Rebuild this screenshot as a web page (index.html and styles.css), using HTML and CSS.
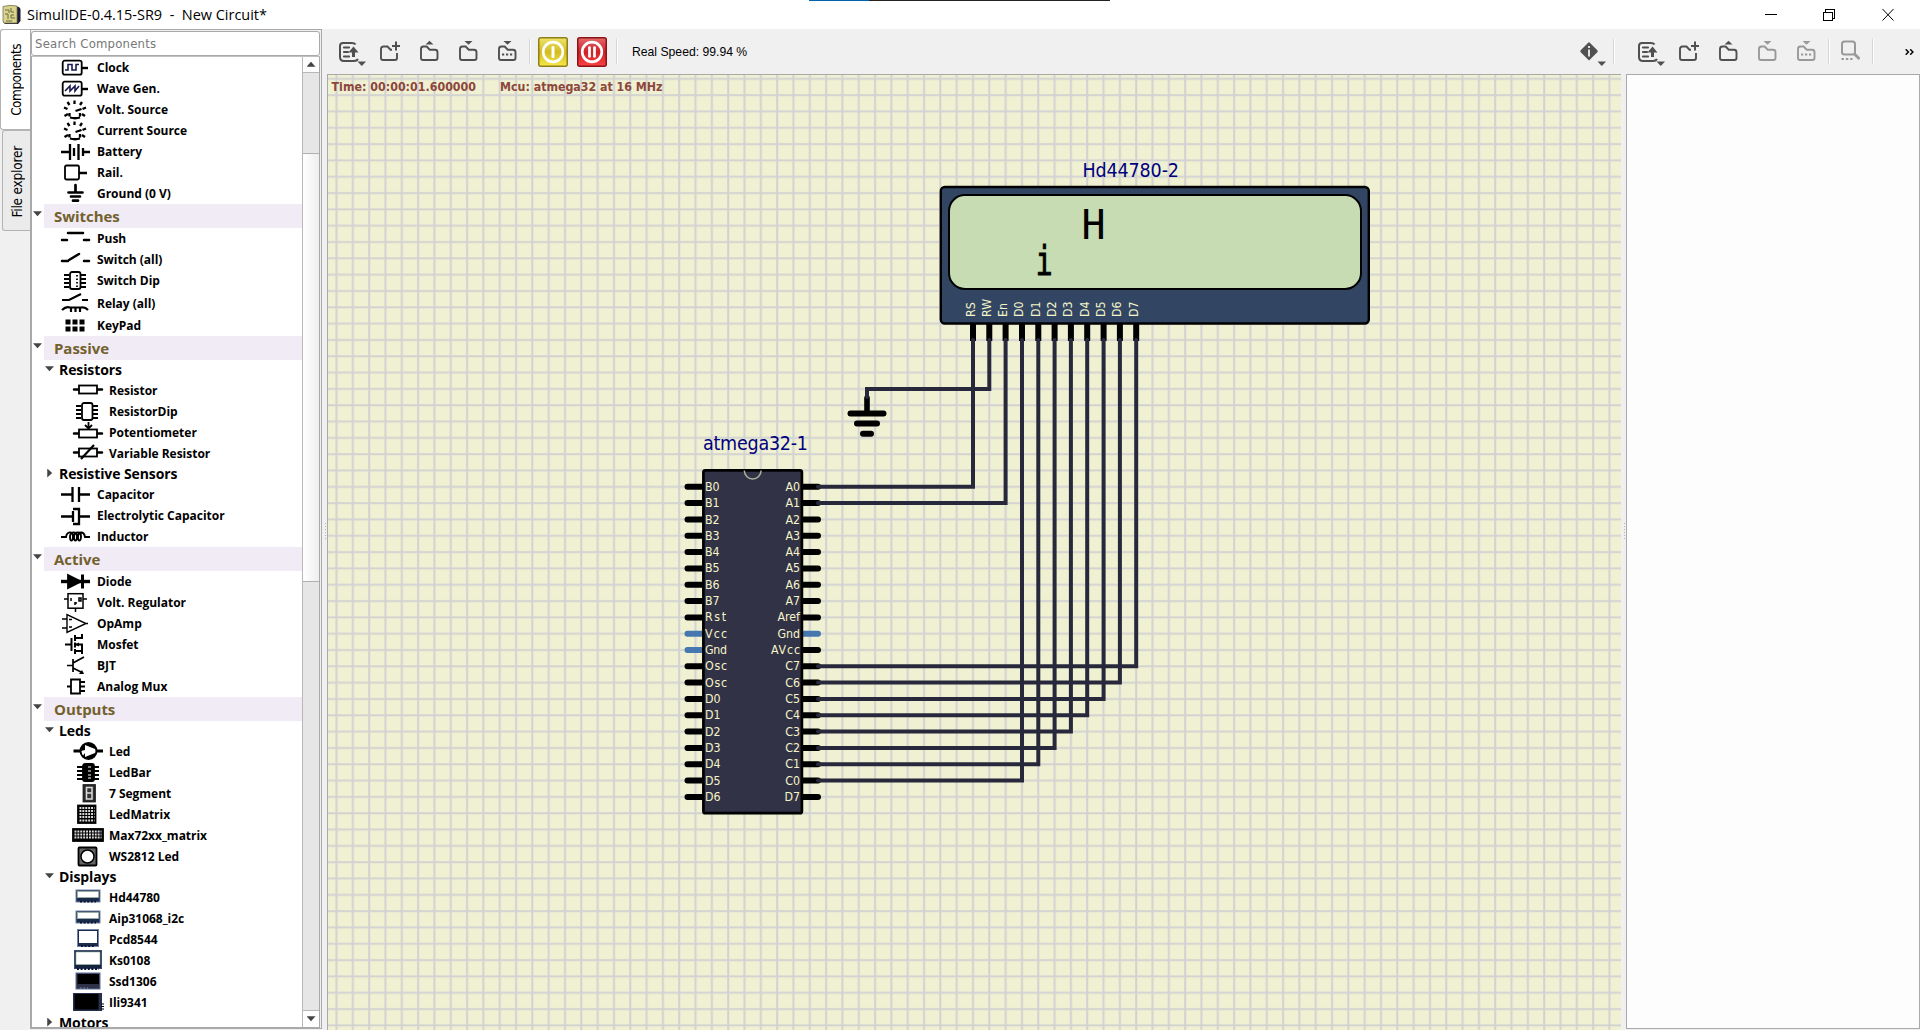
FILE: index.html
```html
<!DOCTYPE html>
<html lang="en">
<head>
<meta charset="utf-8">
<title>SimulIDE-0.4.15-SR9 - New Circuit*</title>
<link rel="stylesheet" href="styles.css">
</head>
<body>
<svg class="defs" width="0" height="0">
  <defs>
    <symbol id="clock" viewBox="0 0 32 21"><rect x="2.7" y="3.7" width="19" height="14" rx="2"/><path d="M22 11h6" stroke-width="2.4"/><path class="navy" d="M5 13h3V7.500h4V13h4V7.500h3"/></symbol>
    <symbol id="wave" viewBox="0 0 32 21"><rect x="2.7" y="3.7" width="19" height="14" rx="2"/><path d="M22 11h6" stroke-width="2.4"/><path class="navy" d="M5 13l5-5v5l5-5v5l4-5"/></symbol>
    <symbol id="source" viewBox="0 0 32 21"><path stroke-width="2.300" d="M14.500 1.500v3.500M7.500 3l2 3M22 3l-2 3M4 8.500l3.500 1.500M4.500 17l3.500-2M26 8.500l-3.500 1.500M25 17l-3-2M15.500 12l6-2M10 18.500q5 1.500 10 0M9.500 14v3.500M20 14v3.500"/></symbol>
    <symbol id="battery" viewBox="0 0 32 21"><path stroke-width="2.400" d="M1 11h8M24 11h6"/><path d="M10 3v16M14 7v8M18.500 3v16M23 7v8" stroke-width="2.300"/></symbol>
    <symbol id="rail" viewBox="0 0 32 21"><rect x="5" y="3.500" width="14" height="14" rx="1.500"/><path d="M19 11h8" stroke-width="2.500"/></symbol>
    <symbol id="ground" viewBox="0 0 32 21"><path stroke-width="2.700" stroke-linecap="round" d="M15.500 2v7M8.500 9.500h14M11 13.500h9M13 17.700h5"/></symbol>
    <symbol id="push" viewBox="0 0 32 21"><path stroke-width="2.500" stroke-linecap="round" d="M8 5h15M2 12h5M24 12h5"/></symbol>
    <symbol id="switch" viewBox="0 0 32 21"><path stroke-width="2.500" stroke-linecap="round" d="M2 12h6M9 11l10-6M24 12h5"/></symbol>
    <symbol id="dip" viewBox="0 0 32 21"><path stroke-width="1.800" d="M4 5h5M4 9h5M4 13h5M4 17h5M21 5h5M21 9h5M21 13h5M21 17h5"/><rect x="10" y="2" width="10.500" height="17" rx="2"/></symbol>
    <symbol id="switchdip" viewBox="0 0 32 21"><use href="#dip" width="32" height="21"/><path stroke-dasharray="1.500 2" d="M17 5v12"/></symbol>
    <symbol id="relay" viewBox="0 0 32 21"><path stroke-width="2.200" d="M2 7h7l12-6M22 7h6M2 17q4-4 8-2.500h11q4-1 7 2.500M11 14v5M15.500 14v5M20 14v5"/></symbol>
    <symbol id="keypad" viewBox="0 0 32 21"><path stroke-width="5" stroke-dasharray="5 2" d="M5.500 7h19M5.500 14h19"/></symbol>
    <symbol id="resistor" viewBox="0 0 32 21"><rect x="7" y="5.500" width="18" height="8"/><path stroke-width="2.500" stroke-linecap="round" d="M2 9.500h4M26 9.500h4"/></symbol>
    <symbol id="pot" viewBox="0 0 32 21"><g transform="translate(0 2)"><use href="#resistor" width="32" height="21"/></g><path d="M16.500 0v5.500M13 3l3.500 3.500L20 3"/></symbol>
    <symbol id="varres" viewBox="0 0 32 21"><use href="#resistor" width="32" height="21"/><path stroke-width="2.200" d="M9 16L22 2"/></symbol>
    <symbol id="cap" viewBox="0 0 32 21"><path stroke-width="2.300" d="M1 10.500h11M12.500 3v15M19 3v15M19 10.500h11"/></symbol>
    <symbol id="ecap" viewBox="0 0 32 21"><path stroke-width="2.300" d="M1 11.500h11M13 6v11M13 4h6v15h-6M19 11.500h11"/></symbol>
    <symbol id="inductor" viewBox="0 0 32 21"><path stroke-width="1.900" d="M1 11h5c1-6 7-6 7-1 0 6-3 6-3 1 0-6 7-6 7-1 0 6-3 6-3 1 0-6 7-6 7-1 0 6-3 6-3 1 0-6 6-6 7 0h5"/></symbol>
    <symbol id="diode" viewBox="0 0 32 21"><path stroke-width="3.400" d="M1 10.500h29"/><path fill="#000" d="M8 4l13 6.500L8 17z"/><path stroke-width="3" d="M22.500 3.500v14"/></symbol>
    <symbol id="vreg" viewBox="0 0 32 21"><rect x="8" y="1.700" width="15" height="14.500" stroke-width="1.500"/><path stroke-width="1.500" d="M4 7h4M23 7h4M15.500 16v4M11 6v3M19 6h2v3h-2zM15 10v3m0-2h2"/></symbol>
    <symbol id="opamp" viewBox="0 0 32 21"><path stroke-width="1.400" d="M7 1.500v18l19-9zM2 6h5M2 15h5M26 10.500h2M9 6.500h3M9 14h3"/></symbol>
    <symbol id="mosfet" viewBox="0 0 32 21"><path stroke-width="2" d="M5 10.500h6M11.500 4v13M15 1v6M15 8.500v5M15 15v5M15 4h7V0M15 17h7M22 20V10.500h-6"/><path fill="#000" d="M15 10.500l4-2v4z" stroke="none"/></symbol>
    <symbol id="bjt" viewBox="0 0 32 21"><path stroke-width="1.700" d="M7 10.500h6M13 4v13M13 8l11-6M13 13l10 5"/><path fill="#000" stroke="none" d="M24 19l-5 0 3-4z"/></symbol>
    <symbol id="mux" viewBox="0 0 32 21"><path stroke-width="1.800" d="M7 10.500h4M20 6h5M20 10.500h5M20 15h5M11 3.500h9v14h-9z"/></symbol>
    <symbol id="led" viewBox="0 0 32 21"><circle cx="16.500" cy="10" r="8" stroke-width="2"/><path stroke-width="3" d="M1.500 10h7M24 10h7"/><path fill="#000" stroke="none" d="M10 4q6-4 13 0v4L13 4v5l-4 1zM10 16q6 4 13 0v-4l-10 4v-4z"/></symbol>
    <symbol id="ledbar" viewBox="0 0 32 21"><path stroke-width="2" d="M5 5h22M5 9h22M5 13h22M5 17h22"/><rect x="11" y="2" width="11" height="17" rx="2" fill="#000"/><path stroke="#fff" stroke-width="1.200" d="M16 5h3M16 9h3M16 13h3M16 16h3"/></symbol>
    <symbol id="seg" viewBox="0 0 32 21"><rect x="11.500" y="2" width="11.500" height="16.500" stroke="#222" fill="#333"/><path stroke="#ddd" stroke-width="1.500" d="M14.500 4.500h5.500v11.500h-5.500zM14.500 10h5.500"/></symbol>
    <symbol id="matrix" viewBox="0 0 32 21"><rect x="6" y="1.500" width="17.500" height="17.500" fill="#000"/><path stroke="#ddd" stroke-width="1.800" stroke-dasharray="1.900 1" d="M7.500 4h15M7.500 7h15M7.500 10h15M7.500 13h15M7.500 16.500h15"/></symbol>
    <symbol id="max" viewBox="0 0 32 21"><rect x="1" y="4" width="30" height="12" fill="#000"/><path stroke="#ddd" stroke-width="1.800" stroke-dasharray="1.900 1" d="M2.500 6.500h27M2.500 9.500h27M2.500 12.500h27"/></symbol>
    <symbol id="ws" viewBox="0 0 32 21"><rect x="6.500" y="1.500" width="18" height="18" rx="1" fill="#666"/><circle cx="15.500" cy="10.500" r="6.500" fill="#fff" stroke-width="1.500"/></symbol>
    <symbol id="lcd" viewBox="0 0 32 21"><rect x="4" y="3" width="24" height="12" fill="#1b2b4d" stroke="#7283a3" stroke-width="1"/><rect x="5.500" y="4.500" width="21" height="6" fill="#fff" stroke="#9fb8a8" stroke-width=".7"/><path stroke="#0a1530" stroke-width="2" stroke-dasharray="2 1.600" d="M8 14.500h16"/></symbol>
    <symbol id="pcd" viewBox="0 0 32 21"><rect x="5.500" y="0.500" width="21" height="17" fill="#1b2b4d" stroke="#7283a3" stroke-width="1"/><rect x="7" y="2" width="18" height="12" fill="#fff" stroke="none"/><path stroke="#0a1530" stroke-width="2" stroke-dasharray="2 1.600" d="M9 17h14"/></symbol>
    <symbol id="ks" viewBox="0 0 32 21"><rect x="2.500" y=".5" width="27" height="18" fill="#14233f" stroke="#3a4d70" stroke-width="1"/><rect x="4" y="2" width="24" height="12.500" fill="#fff" stroke="#9fb8a8" stroke-width=".7"/><path stroke="#0a1530" stroke-width="2" stroke-dasharray="2 1.600" d="M5 19h22"/></symbol>
    <symbol id="ssd" viewBox="0 0 32 21"><rect x="4" y="2" width="24" height="16" fill="#2f3247" stroke="#5d6f96" stroke-width="1"/><rect x="5.500" y="3" width="21.500" height="10" fill="#000" stroke="none"/><path stroke="#7d92c0" stroke-dasharray="1.500 2" stroke-width="1" d="M8 17h8"/></symbol>
    <symbol id="ili" viewBox="0 0 32 21"><rect x="1.500" y="1.500" width="28" height="17" fill="#26304d" stroke="#26304d" stroke-width="1"/><rect x="2.500" y="2" width="24" height="15.500" fill="#000" stroke="none"/><path stroke-width="1" d="M29 12h3M29 14.500h3M29 17h3"/></symbol>

    <symbol id="t-doc" viewBox="0 0 28 26"><path stroke-width="2" d="M17.500 4.500C16.500 2.800 15 3 13 3H5Q2 3 2 6v11q0 4 4 4h10q3 0 4-2"/><path stroke-width="2.200" stroke-linecap="round" d="M6 7.500h5M6 12h4M6 16.500h5"/><path stroke-width="3" d="M15.500 17V9"/><path class="fill" d="M10.500 12.500l5-6 5 6z"/><path class="fill" d="M19.500 21.500h8.500l-4.200 4.500z"/></symbol>
    <symbol id="t-folder" viewBox="0 0 20 22"><path stroke-width="1.900" d="M2 18V9q0-2.500 2.500-2.500h3.200l3 3.200H16q2.500 0 2.500 2.500V18q0 2-2 2H4q-2 0-2-2z"/></symbol>
    <symbol id="t-new" viewBox="0 0 20 22"><path stroke-width="1.900" d="M12 9.700h-1.500l-3-3.200H3.500Q1 6.500 1 9v9q0 2 2 2h12q2 0 2-2v-5"/><path stroke-width="2" d="M16 1.500v9M12 6h8.500"/></symbol>
    <symbol id="t-open" viewBox="0 0 20 22"><use href="#t-folder" width="20" height="22"/><path class="fill" d="M6.500 4.500L10.500.800l4 3.700z"/></symbol>
    <symbol id="t-save" viewBox="0 0 20 22"><use href="#t-folder" width="20" height="22"/><path class="fill" d="M6.500 1L10.500 4.700l4-3.700z"/></symbol>
    <symbol id="t-saveas" viewBox="0 0 20 22"><use href="#t-save" width="20" height="22"/><path stroke-width="2" stroke-dasharray="2.200 1.800" d="M5 14.500h10.500"/></symbol>
    <symbol id="t-search" viewBox="0 0 20 22"><rect x="2" y="1.500" width="13" height="13" rx="2.500" stroke-width="2"/><path stroke-width="2.800" d="M14 13.500l5.500 5.500"/><path stroke-width="2.200" stroke-dasharray="2.400 2" d="M1.500 19h11"/></symbol>
    <symbol id="t-info" viewBox="0 0 28 26"><path class="fill" d="M10 2l8.300 8.200q1 1 0 2L10 20.500l-8.300-8.300q-1-1 0-2z"/><path class="light" stroke-width="1.800" d="M10 6v2M10 9.500v7"/><path class="fill" d="M18.500 21.500H27l-4.200 4.500z"/></symbol>
    <linearGradient id="yel" x2="0" y2="1"><stop offset="0" stop-color="#efe56c"/><stop offset=".5" stop-color="#d2bc20"/><stop offset="1" stop-color="#f6e84c"/></linearGradient>
    <linearGradient id="red" x2="0" y2="1"><stop offset="0" stop-color="#e46a6c"/><stop offset=".5" stop-color="#cf2026"/><stop offset="1" stop-color="#fb4145"/></linearGradient>
    <pattern id="grid" x="971.840" y="485.640" width="16.320" height="16.320" patternUnits="userSpaceOnUse"><path d="M1.160 0V16.320M0 1.160H16.320" stroke="#d2d2d2" stroke-width="2"/></pattern>
  </defs>
</svg>

<header class="titlebar">
  <svg class="app-icon" width="19" height="21" viewBox="0 0 19 21"><path d="M1 3Q9 0 17 3l1.500 2v12L16 20H3L1 18z" fill="#1d1d35"/><path d="M1 2.500q7-2 14-.5v17H2l-1-2z" fill="#d9d38c" stroke="#7b7850" stroke-width=".8"/><path d="M3 6h4v3M3 10h3v5M9 4v4h3M12 11H9v3h4M4 17h6" stroke="#6d6a45" fill="none"/></svg>
  <span class="title">SimulIDE-0.4.15-SR9&nbsp; -&nbsp; New Circuit*</span>
  <span class="top-strip"></span>
  <svg class="win-buttons" width="130" height="14" viewBox="0 0 130 14" shape-rendering="crispEdges"><path d="M0 6.500h12M58.500 4.500h9v8h-9zM60.500 4.500v-3h9v9h-2" /><path shape-rendering="auto" d="M117.500 1l11 11.500M128.500 1l-11 11.500"/></svg>
</header>

<main class="workspace">
  <nav class="tabs">
    <div class="tab active"><span>Components</span></div>
    <div class="tab"><span>File explorer</span></div>
  </nav>

  <aside class="panel">
    <div class="search">Search Components</div>
    <div class="tree">
      <div class="rows">
        <div class="leaf"><svg><use href="#clock"/></svg>Clock</div>
        <div class="leaf"><svg><use href="#wave"/></svg>Wave Gen.</div>
        <div class="leaf"><svg><use href="#source"/></svg>Volt. Source</div>
        <div class="leaf"><svg><use href="#source"/></svg>Current Source</div>
        <div class="leaf"><svg><use href="#battery"/></svg>Battery</div>
        <div class="leaf"><svg><use href="#rail"/></svg>Rail.</div>
        <div class="leaf"><svg><use href="#ground"/></svg>Ground (0 V)</div>
        <div class="category"><i class="down"></i><span>Switches</span></div>
        <div class="leaf"><svg><use href="#push"/></svg>Push</div>
        <div class="leaf"><svg><use href="#switch"/></svg>Switch (all)</div>
        <div class="leaf"><svg><use href="#switchdip"/></svg>Switch Dip</div>
        <div class="leaf tall"><svg><use href="#relay"/></svg>Relay (all)</div>
        <div class="leaf"><svg><use href="#keypad"/></svg>KeyPad</div>
        <div class="category"><i class="down"></i><span>Passive</span></div>
        <div class="group"><i class="down"></i>Resistors</div>
        <div class="leaf sub"><svg><use href="#resistor"/></svg>Resistor</div>
        <div class="leaf sub"><svg><use href="#dip"/></svg>ResistorDip</div>
        <div class="leaf sub"><svg><use href="#pot"/></svg>Potentiometer</div>
        <div class="leaf sub"><svg><use href="#varres"/></svg>Variable Resistor</div>
        <div class="group"><i class="right"></i>Resistive Sensors</div>
        <div class="leaf"><svg><use href="#cap"/></svg>Capacitor</div>
        <div class="leaf"><svg><use href="#ecap"/></svg>Electrolytic Capacitor</div>
        <div class="leaf"><svg><use href="#inductor"/></svg>Inductor</div>
        <div class="category"><i class="down"></i><span>Active</span></div>
        <div class="leaf"><svg><use href="#diode"/></svg>Diode</div>
        <div class="leaf"><svg><use href="#vreg"/></svg>Volt. Regulator</div>
        <div class="leaf"><svg><use href="#opamp"/></svg>OpAmp</div>
        <div class="leaf"><svg><use href="#mosfet"/></svg>Mosfet</div>
        <div class="leaf"><svg><use href="#bjt"/></svg>BJT</div>
        <div class="leaf"><svg><use href="#mux"/></svg>Analog Mux</div>
        <div class="category"><i class="down"></i><span>Outputs</span></div>
        <div class="group"><i class="down"></i>Leds</div>
        <div class="leaf sub"><svg><use href="#led"/></svg>Led</div>
        <div class="leaf sub"><svg><use href="#ledbar"/></svg>LedBar</div>
        <div class="leaf sub"><svg><use href="#seg"/></svg>7 Segment</div>
        <div class="leaf sub"><svg><use href="#matrix"/></svg>LedMatrix</div>
        <div class="leaf sub"><svg><use href="#max"/></svg>Max72xx_matrix</div>
        <div class="leaf sub"><svg><use href="#ws"/></svg>WS2812 Led</div>
        <div class="group"><i class="down"></i>Displays</div>
        <div class="leaf sub"><svg><use href="#lcd"/></svg>Hd44780</div>
        <div class="leaf sub"><svg><use href="#lcd"/></svg>Aip31068_i2c</div>
        <div class="leaf sub"><svg><use href="#pcd"/></svg>Pcd8544</div>
        <div class="leaf sub"><svg><use href="#ks"/></svg>Ks0108</div>
        <div class="leaf sub"><svg><use href="#ssd"/></svg>Ssd1306</div>
        <div class="leaf sub"><svg><use href="#ili"/></svg>Ili9341</div>
        <div class="group"><i class="right"></i>Motors</div>
      </div>
      <div class="scrollbar">
        <div class="arrow"><i class="up"></i></div>
        <div class="trough above"></div>
        <div class="thumb"></div>
        <div class="trough below"></div>
        <div class="arrow last"><i class="down"></i></div>
      </div>
    </div>
  </aside>
  <div class="splitter"></div>

  <section class="circuit">
    <div class="toolbar">
      <svg class="tool menu" width="28" height="26"><use href="#t-doc"/></svg>
      <svg class="tool" width="20" height="22"><use href="#t-new"/></svg>
      <svg class="tool" width="20" height="22"><use href="#t-open"/></svg>
      <svg class="tool" width="20" height="22"><use href="#t-save"/></svg>
      <svg class="tool" width="20" height="22"><use href="#t-saveas"/></svg>
      <i class="sep sep-a"></i>
      <svg class="power" width="30" height="30" viewBox="0 0 30 30"><rect x=".75" y=".75" width="28.500" height="28.500" rx="2" fill="url(#yel)" stroke="#8f7f14" stroke-width="1.500"/><circle cx="15" cy="15" r="9.800" fill="none" stroke="#fff" stroke-width="2.700"/><path d="M15 10.500v9" stroke="#fff" stroke-width="3" stroke-linecap="round"/></svg>
      <svg class="power" width="30" height="30" viewBox="0 0 30 30"><rect x=".75" y=".75" width="28.500" height="28.500" rx="2" fill="url(#red)" stroke="#8c1216" stroke-width="1.500"/><circle cx="15" cy="15" r="9.800" fill="none" stroke="#fff" stroke-width="2.700"/><path d="M12.500 10.500v9M17.500 10.500v9" stroke="#fff" stroke-width="2.700" stroke-linecap="round"/></svg>
      <i class="sep"></i>
      <span class="speed">Real Speed: 99.94 %</span>
      <svg class="tool info" width="28" height="26"><use href="#t-info"/></svg>
      <i class="sep sep-end"></i>
    </div>
    <svg class="canvas" width="1294" height="956" viewBox="327 74 1294 956">
      <rect x="327" y="74" width="1294" height="956" fill="#f0f0d2"/>
      <rect x="327" y="74" width="1294" height="956" fill="url(#grid)"/>
      <path d="M327 74.500h1294M327.500 74v956" stroke="#a9a9a9"/>
      <g class="status">
        <text x="331.500" y="91" textLength="144.500">Time: 00:00:01.600000</text>
        <text x="500" y="91" textLength="162.500">Mcu: atmega32 at 16 MHz</text>
      </g>

      <text class="label" x="1082.500" y="176.500" textLength="96.500">Hd44780-2</text>
      <rect x="940.800" y="187" width="428" height="136.500" rx="4" fill="#324664" stroke="#000" stroke-width="2.400"/>
      <rect x="949" y="195" width="412" height="94" rx="16" fill="#c8dcb4" stroke="#000" stroke-width="2"/>
      <text class="glyph" x="1081.500" y="238.500">H</text>
      <text class="glyph heavy" transform="translate(1035.800 275) scale(.7 1)">i</text>
      <g class="pin-label">
        <text transform="translate(975 317) rotate(-90)">RS</text>
        <text transform="translate(991 317) rotate(-90)">RW</text>
        <text transform="translate(1007 317) rotate(-90)">En</text>
        <text transform="translate(1023 317) rotate(-90)">D0</text>
        <text transform="translate(1040 317) rotate(-90)">D1</text>
        <text transform="translate(1056 317) rotate(-90)">D2</text>
        <text transform="translate(1072 317) rotate(-90)">D3</text>
        <text transform="translate(1089 317) rotate(-90)">D4</text>
        <text transform="translate(1105 317) rotate(-90)">D5</text>
        <text transform="translate(1121 317) rotate(-90)">D6</text>
        <text transform="translate(1138 317) rotate(-90)">D7</text>
      </g>
      <path d="M973 324v17M989.300 324v17M1005.600 324v17M1022 324v17M1038.300 324v17M1054.600 324v17M1070.900 324v17M1087.200 324v17M1103.600 324v17M1119.900 324v17M1136.200 324v17" stroke="#000" stroke-width="6"/>

      <text class="label" x="703" y="449.500" textLength="105">atmega32-1</text>
      <g stroke="#000" stroke-width="6" stroke-linecap="round">
        <path d="M687.500 486.800H702M687.500 503.100H702M687.500 519.400H702M687.500 535.800H702M687.500 552.100H702M687.500 568.400H702M687.500 584.700H702M687.500 601H702M687.500 617.400H702M687.500 666.300H702M687.500 682.600H702M687.500 699H702M687.500 715.300H702M687.500 731.600H702M687.500 747.900H702M687.500 764.200H702M687.500 780.600H702M687.500 796.900H702"/>
        <path d="M803 486.800h15M803 503.100h15M803 519.400h15M803 535.800h15M803 552.100h15M803 568.400h15M803 584.700h15M803 601h15M803 617.400h15M803 650h15M803 666.300h15M803 682.600h15M803 699h15M803 715.300h15M803 731.600h15M803 747.900h15M803 764.200h15M803 780.600h15M803 796.900h15"/>
        <path stroke="#4678af" d="M687.500 633.700H702M687.500 650H702M803 633.700h15"/>
        <path stroke-width="5.600" d="M867 398v13"/>
        <path d="M850.500 413.400h33M857 423.600h20M863 433.700h8"/>
      </g>
      <rect x="703.400" y="470.400" width="98.500" height="342.800" rx="2" fill="#323246" stroke="#000" stroke-width="2.700"/>
      <path d="M744.300 470.500a8.400 8.400 0 0 0 16.800 0" fill="none" stroke="#afaf9b" stroke-width="1.500"/>
      <g class="pin-label">
        <text x="705" y="491">B0</text><text x="705" y="507">B1</text><text x="705" y="524">B2</text><text x="705" y="540">B3</text>
        <text x="705" y="556">B4</text><text x="705" y="572">B5</text><text x="705" y="589">B6</text><text x="705" y="605">B7</text>
        <text x="705" y="621" textLength="21">Rst</text><text x="705" y="638" textLength="22">Vcc</text><text x="705" y="654" textLength="22">Gnd</text>
        <text x="705" y="670" textLength="22">Osc</text><text x="705" y="687" textLength="22">Osc</text><text x="705" y="703">D0</text><text x="705" y="719">D1</text>
        <text x="705" y="736">D2</text><text x="705" y="752">D3</text><text x="705" y="768">D4</text><text x="705" y="785">D5</text><text x="705" y="801">D6</text>
      </g>
      <g class="pin-label end">
        <text x="800" y="491">A0</text><text x="800" y="507">A1</text><text x="800" y="524">A2</text><text x="800" y="540">A3</text>
        <text x="800" y="556">A4</text><text x="800" y="572">A5</text><text x="800" y="589">A6</text><text x="800" y="605">A7</text>
        <text x="800" y="621">Aref</text><text x="800" y="638">Gnd</text><text x="800" y="654" textLength="29">AVcc</text>
        <text x="800" y="670">C7</text><text x="800" y="687">C6</text><text x="800" y="703">C5</text><text x="800" y="719">C4</text>
        <text x="800" y="736">C3</text><text x="800" y="752">C2</text><text x="800" y="768">C1</text><text x="800" y="785">C0</text><text x="800" y="801">D7</text>
      </g>

      <g class="wires">
        <path d="M973 340V486.800H818"/>
        <path d="M989.300 340V388.900H867V397"/>
        <path d="M1005.600 340V503.100H818"/>
        <path d="M1022 340V780.600H818"/>
        <path d="M1038.300 340V764.200H818"/>
        <path d="M1054.600 340V747.900H818"/>
        <path d="M1070.900 340V731.600H818"/>
        <path d="M1087.200 340V715.300H818"/>
        <path d="M1103.600 340V699H818"/>
        <path d="M1119.900 340V682.600H818"/>
        <path d="M1136.200 340V666.300H818"/>
      </g>
    </svg>
  </section>
  <div class="splitter"></div>

  <section class="editor">
    <div class="toolbar">
      <svg class="tool menu" width="28" height="26"><use href="#t-doc"/></svg>
      <svg class="tool" width="20" height="22"><use href="#t-new"/></svg>
      <svg class="tool" width="20" height="22"><use href="#t-open"/></svg>
      <svg class="tool off" width="20" height="22"><use href="#t-save"/></svg>
      <svg class="tool off" width="20" height="22"><use href="#t-saveas"/></svg>
      <i class="sep sep-a"></i>
      <svg class="tool off find" width="20" height="22"><use href="#t-search"/></svg>
      <i class="sep"></i>
      <svg class="more" width="9" height="6" viewBox="0 0 9 6"><path d="M.700 .3L3.400 3 .700 5.700M5.200 .3L7.900 3 5.200 5.700"/></svg>
    </div>
    <div class="page"></div>
  </section>
</main>
</body>
</html>
```
FILE: styles.css
```css
* { box-sizing: border-box; }

body {
  margin: 0;
  width: 1920px;
  height: 1030px;
  overflow: hidden;
  display: flex;
  flex-direction: column;
  background: #f0f0f0;
  font-family: "DejaVu Sans Condensed", "DejaVu Sans", sans-serif;
  font-stretch: condensed;
  color: #000;
}

.defs { position: absolute; }

.titlebar {
  position: relative;
  height: 29px;
  flex: none;
  display: flex;
  align-items: center;
  background: #fff;
  padding: 0 25px 0 2px;
}
.title {
  margin-left: 6px;
  font: 14.5px "Open Sans", sans-serif;
  letter-spacing: -0.02px;
  white-space: pre;
}
.top-strip {
  position: absolute;
  left: 809px;
  top: 0;
  width: 301px;
  height: 1px;
  background: linear-gradient(90deg, #0063b1 60px, #222 60px);
}
.win-buttons { margin-left: auto; fill: none; stroke: #000; stroke-width: 1; }

.workspace { flex: 1; min-height: 0; display: flex; }

.tabs { width: 30px; flex: none; }
.tab {
  width: 28px;
  height: 101px;
  margin-left: 2px;
  border: 1px solid #b4b4b4;
  border-right: 0;
  border-radius: 3px 0 0 3px;
  background: #ebebeb;
  display: flex;
  align-items: center;
  justify-content: center;
  font-size: 13.5px;
  letter-spacing: -0.5px;
}
.tab:not(.active) { padding-top: 2px; letter-spacing: -0.2px; }
.tab.active { width: 30px; margin-left: 0; background: #fff; }
.tab span { writing-mode: vertical-rl; transform: rotate(180deg); white-space: nowrap; }

.panel {
  width: 292px;
  flex: none;
  height: 1000px;
  border: 1px solid #a9a9a9;
  padding: 1px 1px 0 0;
  display: flex;
  flex-direction: column;
}
.search {
  height: 25px;
  flex: none;
  border: 1px solid #a9a9a9;
  border-radius: 3px;
  background: #fff;
  color: #777;
  font-size: 13px;
  line-height: 24px;
  padding-left: 3px;
  letter-spacing: .2px;
}
.tree {
  flex: 1;
  min-height: 0;
  display: flex;
  border: 1px solid #a9a9a9;
  border-top-color: #c0c0c0;
  background: #fff;
}
.rows { flex: 1; overflow: hidden; height: 970px; }

.leaf {
  height: 21px;
  display: flex;
  align-items: center;
  padding-left: 28px;
  gap: 5px;
  font: bold 12px "Open Sans", sans-serif;
  letter-spacing: -0.02px;
  white-space: nowrap;
}
.leaf.tall { height: 24px; }
.leaf.sub { padding-left: 40px; }
.leaf svg { width: 32px; height: 21px; flex: none; fill: none; stroke: #000; stroke-width: 1.8; }
.navy { stroke: #191950; stroke-width: 1.6; }

.category { height: 24px; display: flex; align-items: center; }
.category i { margin: -4px 2px 0 1px; }
.category span {
  flex: 1;
  height: 24px;
  padding-left: 10px;
  background: #f0ebf5;
  color: #73602d;
  font: bold 15px/25px "Open Sans", sans-serif;
  letter-spacing: -0.05px;
}
.group {
  height: 20px;
  display: flex;
  align-items: center;
  padding: 0 0 2px 13px;
  font: bold 14px "Open Sans", sans-serif;
  letter-spacing: -0.1px;
}
.group i { margin-right: 5px; }

i.down, i.up, i.right { width: 9px; height: 9px; flex: none; background: #444; }
i.down { clip-path: polygon(0 20%, 100% 20%, 50% 75%); }
i.up { clip-path: polygon(0 75%, 100% 75%, 50% 20%); }
i.right { clip-path: polygon(25% 0, 80% 50%, 25% 100%); }

.scrollbar {
  width: 17px;
  flex: none;
  border-left: 1px solid #b8b8b8;
  display: flex;
  flex-direction: column;
}
.arrow { height: 16px; flex: none; display: flex; align-items: center; justify-content: center; border-bottom: 1px solid #b8b8b8; }
.arrow.last { height: 17px; border: 0; border-top: 1px solid #b8b8b8; }
.trough { background: #e6e6e6; }
.trough.above { height: 80px; flex: none; }
.thumb {
  height: 429px;
  flex: none;
  border: solid #b0b0b0;
  border-width: 1px 0;
  background: linear-gradient(90deg, #fff, #eee);
}
.trough.below { flex: 1; }

.splitter {
  width: 5px;
  flex: none;
  background: repeating-linear-gradient(#b4b4b4 0 1px, transparent 1px 3px) 3px 494px / 1px 16px no-repeat;
}

.circuit { width: 1294px; flex: none; display: flex; flex-direction: column; }
.toolbar { height: 45px; flex: none; display: flex; align-items: center; padding-left: 11px; }
.tool { flex: none; fill: none; stroke: #505050; margin: -1px 19px 0 0; color: #505050; }
.tool.menu { margin: 3px 14px 0 0; }
.tool.off { stroke: #999; color: #999; }
.fill { fill: currentColor; stroke: none; }
.light { stroke: #f0f0f0; }
.sep { width: 2px; height: 25px; flex: none; margin: 0 7px 0 6px; background: linear-gradient(90deg, #d6d6d6 50%, #fff 50%); }
.sep-a { margin-left: -7px; }
.sep-end { margin: 0 6px 0 0; }
.power { flex: none; margin-right: 9px; }
.power + .sep { margin-left: 0; }
.speed { margin-left: 7px; flex: 1; font: 12.2px "Liberation Sans", sans-serif; }
.tool.info { margin: 3px 6px 0 0; }
.canvas { display: block; flex: none; }

.status { font: bold 12.3px "DejaVu Sans Condensed", "DejaVu Sans", sans-serif; font-stretch: condensed; fill: #8c463c; }
.label { font-size: 19.5px; fill: #000080; }
.glyph { font: 40px "DejaVu Sans Mono", monospace; fill: #000; }
.heavy { stroke: #000; stroke-width: 1; }
.pin-label { font-size: 12.3px; fill: #f5f5c8; }
.pin-label.end { text-anchor: end; }
.wires { fill: none; stroke: #28283c; stroke-width: 4; stroke-linecap: round; }

.editor { flex: 1; display: flex; flex-direction: column; }
.editor .toolbar { padding-left: 11px; }
.editor .sep-a { margin-right: 10px; }
.find { margin-right: 6px; }
.more { margin-left: auto; margin-right: 6px; fill: none; stroke: #000; stroke-width: 1.5; }
.page { height: 955px; background: #fdfdfd; border: 1px solid #a9a9a9; }
```
